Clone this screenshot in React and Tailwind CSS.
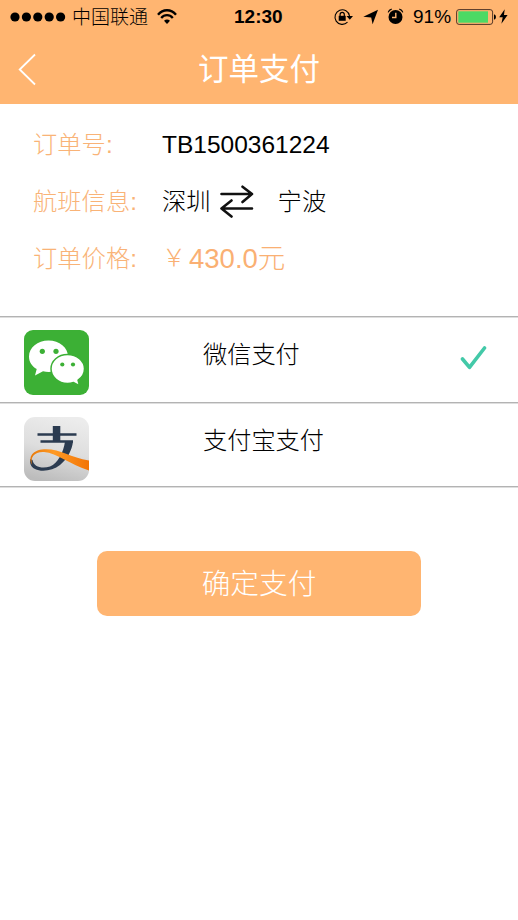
const BODY_FONT = "font-['Liberation_Sans','Noto_Sans_CJK_SC',sans-serif]";

function StatusBar() {
    return (
        <div className="flex items-center h-[33px] text-[19px] leading-[33px] text-black whitespace-nowrap">
            <div className="flex items-center w-[234px] pl-[10px]">
                <svg className="w-[56px] h-[10px] shrink-0" viewBox="0 0 56 10">
                    {[5, 16.4, 27.8, 39.2, 50.6].map((cx) => (
                        <circle key={cx} cx={cx} cy="5" r="4.6" />
                    ))}
                </svg>
                <span className="w-[91px] pt-[2px] pl-[6px] leading-[31px] font-light">中国联通</span>
                <svg className="w-[20px] h-[16px] shrink-0" viewBox="0 0 20 16" fill="none" stroke="#000">
                    <path d="M1 5.8C6-.2 14-.2 19 5.8" strokeWidth="2.4" />
                    <path d="M4.2 9C7.5 5.2 12.5 5.2 15.8 9" strokeWidth="2.3" />
                    <path d="M7 11.8Q10 9 13 11.8L10 15z" fill="#000" stroke="none" />
                </svg>
            </div>
            <span className="w-[99px] font-bold">12:30</span>
            <svg className="w-[21px] h-[18px]" viewBox="0 0 21 18" fill="none" stroke="#000">
                <path d="M14.5 14.2A7.3 7.3 0 1 1 16.5 8" strokeWidth="1.1" />
                <path d="M13.5 8h6.500l-3.200 3.800z" fill="#000" stroke="none" />
                <rect x="5.700" y="7.800" width="7" height="5" fill="#000" stroke="none" />
                <path d="M7.100 8.500V6.500a2.100 2.100 0 0 1 4.200 0v2" strokeWidth="1.200" />
            </svg>
            <svg className="w-[16px] h-[16px] ml-[9px]" viewBox="0 0 16 16">
                <path d="M15 .8L9.600 15.300 8.200 8.400.3 7.800z" />
            </svg>
            <svg className="w-[17px] h-[17px] ml-[8px]" viewBox="0 0 17 17">
                <circle cx="8.500" cy="9" r="7" />
                <path d="M1.200 4.400Q2 1.800 4.700 1.200M15.800 4.400Q15 1.800 12.300 1.200" fill="none" stroke="#000" strokeWidth="1.200" />
                <path d="M8.800 4.800V9.500H5" fill="none" stroke="#ffb571" strokeWidth="1.400" />
            </svg>
            <span className="w-[43px] ml-[9px]">91%</span>
            <svg className="w-[41px] h-[16px]" viewBox="0 0 41 16">
                <rect x=".6" y=".6" width="36" height="14.800" rx="2.500" fill="none" stroke="#513526" strokeWidth="1" />
                <rect x="2.300" y="2.300" width="29.700" height="11.400" fill="#4cd964" />
                <path d="M38 5.300Q40 6 40 8T38 10.700z" />
            </svg>
            <svg className="w-[9px] h-[15px] ml-[2px]" viewBox="0 0 9 15">
                <path d="M5.700.2L.2 8.300h3.500L2.400 14.700 8.600 6H5z" />
            </svg>
        </div>
    );
}

function WechatIcon() {
    return (
        <svg className="w-[65px] h-[65px]" viewBox="0 0 65 65">
            <rect width="65" height="65" rx="9" fill="#3cb035" />
            <path d="M24.500 10.500C13.500 10.500 5 17.500 5 26.500c0 5.500 3 9.700 7.700 12.500L11 45.500l8-4.200c11 2.700 25-2.800 25-14.800 0-9-8.500-16-19.500-16z" fill="#fff" />
            <path d="M43.500 24.500C34 24.500 27 31 27 38.800S34 53.500 43.500 53.500c2.300 0 4.200-.4 6-1l6 3.200-1.400-5.500C58 47.500 60.500 43.500 60.500 38.800c0-7.800-7.500-14.300-17-14.300z" fill="#fff" stroke="#3cb035" strokeWidth="1.500" />
            <g fill="#3cb035">
                <circle cx="18.300" cy="21.300" r="2.600" />
                <circle cx="32" cy="21.300" r="2.600" />
                <circle cx="38.300" cy="34.500" r="2.100" />
                <circle cx="49" cy="34.500" r="2.100" />
            </g>
        </svg>
    );
}

function AlipayIcon() {
    return (
        <svg className="w-[65px] h-[64px]" viewBox="0 0 65 64">
            <defs>
                <linearGradient id="plate" x1=".6" y1="0" x2=".35" y2="1">
                    <stop offset="0" stopColor="#ececec" />
                    <stop offset=".5" stopColor="#dedede" />
                    <stop offset="1" stopColor="#bcbcbc" />
                </linearGradient>
                <linearGradient id="ribbon" x1="0" y1="0" x2="1" y2="0">
                    <stop offset="0" stopColor="#e87909" />
                    <stop offset=".4" stopColor="#ff9a25" />
                    <stop offset="1" stopColor="#f27405" />
                </linearGradient>
            </defs>
            <rect width="65" height="64" rx="11" fill="url(#plate)" />
            <g fill="#2b3b50">
                <path d="M28.800 9h7.500v15h-7.500z" />
                <path d="M13.500 16.300h39v2.400h-39zM16.500 23.300h32.500v2.400H16.500z" />
                <path d="M41 24.500h8C48 33 43.500 42 36 48 29 53.500 18 55.500 11 52 7 50 5.500 46.500 6.300 42L8.500 43C9.500 50 18 52 26 49.500 34 46.500 39.500 35 41 24.500z" />
            </g>
            <path d="M8.300 48C3.500 40.500 8.500 33 20 32.300 35 31.300 46 40.500 65 43.500V53.500C46 47.500 33 36 20 35 10.500 34.500 5.500 40.500 8.300 48z" fill="url(#ribbon)" />
        </svg>
    );
}

function InfoRow({ label, children }) {
    return (
        <div className="flex items-center h-[57px]">
            <span className="w-[129px] pt-[2px] text-[24.300px] font-light text-[#f9b377]">{label}</span>
            {children}
        </div>
    );
}

const methods = [
    { name: '微信支付', icon: WechatIcon, row: 'h-[86px] pt-[13px]', text: 'leading-[50px]', selected: true },
    { name: '支付宝支付', icon: AlipayIcon, row: 'h-[84px] pt-[14px]', text: 'leading-[48px]', selected: false },
];

export default function App() {
    return (
        <div className={`w-[518px] h-[920px] bg-white text-black overflow-hidden ${BODY_FONT}`}>
            <header className="h-[104px] bg-[#ffb571]">
                <StatusBar />
                <div className="flex items-center h-[71px] text-white">
                    <svg className="w-[20px] h-[34px] ml-[18px]" viewBox="0 0 20 34" fill="none" stroke="#fff" strokeWidth="1.800">
                        <path d="M17 2.500L1.700 17.500 17 32.500" />
                    </svg>
                    <h1 className="pt-[2px] ml-[160px] text-[30.500px] leading-[69px]">订单支付</h1>
                </div>
            </header>

            <section className="h-[212px] pt-[12px] pl-[33px] whitespace-nowrap">
                <InfoRow label="订单号:">
                    <span className="pt-[2px] text-[24.500px]">TB1500361224</span>
                </InfoRow>
                <InfoRow label="航班信息:">
                    <span className="pt-[2px] text-[24.300px] font-light">深圳</span>
                    <svg className="w-[34px] h-[33px] ml-[9px] mr-[24px]" viewBox="0 0 34 33" fill="none" stroke="#111" strokeWidth="2.600" strokeLinecap="round" strokeLinejoin="round">
                        <path d="M1.500 9H32M22.500 1.700L32 9l-9.500 8" />
                        <path d="M32 23.500H1.500M11.500 15.500l-10 8 10 8" />
                    </svg>
                    <span className="pt-[2px] text-[24.300px] font-light">宁波</span>
                </InfoRow>
                <InfoRow label="订单价格:">
                    <span className="flex items-baseline text-[27.500px] text-[#fab073]">
                        <span className="relative -top-[2px] w-[27px] text-[24px] font-light font-['Noto_Sans_CJK_SC',sans-serif]">￥</span>
                        <span>430.0</span>
                        <span className="font-light">元</span>
                    </span>
                </InfoRow>
            </section>

            <section className="border-t border-[#b3b3b3] shadow-[inset_0_1px_0_#dedede]">
                {methods.map((m) => (
                    <div key={m.name} className={`flex items-start pl-[24px] pr-[31px] border-b border-[#b3b3b3] shadow-[0_1px_0_#dedede] ${m.row}`}>
                        <m.icon />
                        <span className={`ml-[114px] flex-1 text-[24.200px] font-light ${m.text}`}>{m.name}</span>
                        {m.selected && (
                            <svg className="w-[27px] h-[26px] mt-[15px]" viewBox="0 0 27 26" fill="none" stroke="#43c9a8" strokeWidth="3.600" strokeLinecap="round" strokeLinejoin="round">
                                <path d="M2.500 14L9.500 22.300 24.500 3" />
                            </svg>
                        )}
                    </div>
                ))}
            </section>

            <button className="block w-[324px] h-[65px] mt-[64px] ml-[97px] pt-[1px] rounded-[10px] bg-[#ffb571] text-[28.700px] leading-[62px] font-light text-white">
                确定支付
            </button>
        </div>
    );
}
